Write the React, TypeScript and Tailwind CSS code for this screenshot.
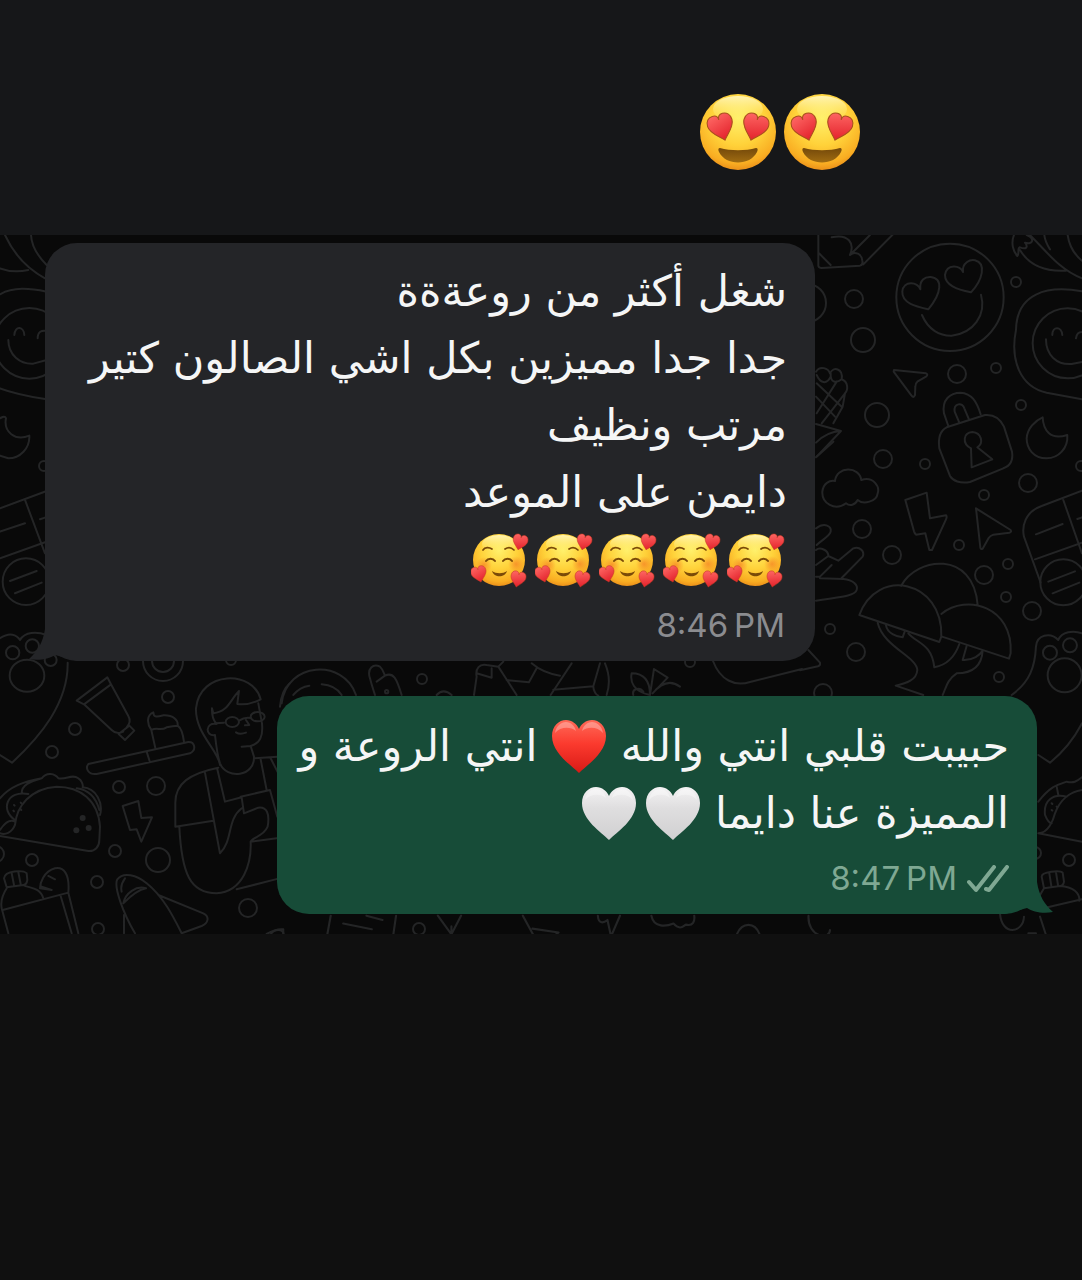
import type { ReactNode } from 'react'

const HEART = 'M0 13C-4 8-12 3-12-4C-12-9-9-12-5-12C-2-12 0-10 0-7C0-10 2-12 5-12C9-12 12-9 12-4C12 3 4 8 0 13Z'

// Shared gradients, referenced by every emoji below
function EmojiDefs() {
  return (
    <svg className="absolute h-0 w-0" aria-hidden="true">
      <defs>
        <radialGradient id="face" cx="50%" cy="32%" r="70%">
          <stop offset="0" stopColor="#fff06a" />
          <stop offset="0.5" stopColor="#ffd23a" />
          <stop offset="0.85" stopColor="#f9ad22" />
          <stop offset="1" stopColor="#e88a18" />
        </radialGradient>
        <linearGradient id="faceShine" x1="0" y1="0" x2="0" y2="1">
          <stop offset="0" stopColor="#fffbd0" stopOpacity="0.8" />
          <stop offset="1" stopColor="#fff06a" stopOpacity="0" />
        </linearGradient>
        <linearGradient id="smallHeart" x1="0" y1="0" x2="0.3" y2="1">
          <stop offset="0" stopColor="#ff6a66" />
          <stop offset="1" stopColor="#e5262f" />
        </linearGradient>
        <linearGradient id="redHeart" x1="0" y1="0" x2="0" y2="1">
          <stop offset="0" stopColor="#ff6a58" />
          <stop offset="0.45" stopColor="#fb3a2e" />
          <stop offset="1" stopColor="#d91a16" />
        </linearGradient>
        <linearGradient id="whiteHeart" x1="0" y1="0" x2="0" y2="1">
          <stop offset="0" stopColor="#f4f3f4" />
          <stop offset="0.4" stopColor="#dfdedf" />
          <stop offset="1" stopColor="#d0d0d1" />
        </linearGradient>
        <linearGradient id="mouth" x1="0" y1="0" x2="0" y2="1">
          <stop offset="0" stopColor="#74490a" />
          <stop offset="1" stopColor="#a06c12" />
        </linearGradient>
        <radialGradient id="blush">
          <stop offset="0" stopColor="#f47a24" stopOpacity="0.65" />
          <stop offset="1" stopColor="#f47a24" stopOpacity="0" />
        </radialGradient>
      </defs>
    </svg>
  )
}

function HeartEyes() {
  return (
    <svg viewBox="0 0 76 76" className="h-[76px] w-[76px]" role="img" aria-label="😍">
      <circle cx="38" cy="38" r="38" fill="url(#face)" />
      <ellipse cx="38" cy="15" rx="25" ry="13" fill="url(#faceShine)" />
      <g fill="url(#smallHeart)" stroke="#a8501d" strokeWidth="1">
        <path d={HEART} transform="translate(21 33) rotate(-17) scale(1.06)" />
        <path d={HEART} transform="translate(55 33) rotate(17) scale(1.06)" />
      </g>
      <path d="M20 54C30 57 46 57 56 54C58 54 58 56 57 58C50 72 26 72 19 58C18 56 18 54 20 54Z" fill="url(#mouth)" />
    </svg>
  )
}

function SmilingHearts() {
  return (
    <svg viewBox="0 0 58 56" className="h-[56px] w-[58px] shrink-0" role="img" aria-label="🥰">
      <circle cx="28" cy="28" r="26" fill="url(#face)" />
      <ellipse cx="28" cy="12" rx="17" ry="9" fill="url(#faceShine)" />
      <circle cx="13" cy="33" r="8" fill="url(#blush)" />
      <circle cx="45" cy="32" r="8" fill="url(#blush)" />
      <g fill="none" stroke="#7a4a08" strokeWidth="1.700" strokeLinecap="round">
        <path d="M12 18C14 15 18 15 21 17" />
        <path d="M34 17C37 15 40 15 43 18" />
        <path d="M15 29C17 26 22 26 24 29" strokeWidth="2" />
        <path d="M32 29C34 26 39 26 41 29" strokeWidth="2" />
      </g>
      <path d="M21 39C25 42 32 42 36 39C34 46 23 46 21 39Z" fill="#7a4a08" />
      <g fill="url(#smallHeart)" stroke="#c43a22" strokeWidth="0.800">
        <path d={HEART} transform="translate(49 10) rotate(14) scale(0.62)" />
        <path d={HEART} transform="translate(8 42) rotate(-14) scale(0.64)" />
        <path d={HEART} transform="translate(47 47) rotate(12) scale(0.63)" />
      </g>
    </svg>
  )
}

function BigHeart({ white = false }: { white?: boolean }) {
  return (
    <svg
      viewBox="0 0 56 56"
      className="h-[56px] w-[56px] shrink-0"
      role="img"
      aria-label={white ? '🤍' : '❤️'}
    >
      <path
        d="M28 54C20 46 1 34 1 17C1 7 8 1 15 1C21 1 26 5 28 10C30 5 35 1 41 1C48 1 55 7 55 17C55 34 36 46 28 54Z"
        fill={white ? 'url(#whiteHeart)' : 'url(#redHeart)'}
      />
      <path
        d="M4 14C5 7 10 3 15 3C20 3 24 7 25 12C19 7 9 8 4 14ZM52 14C51 7 46 3 41 3C36 3 32 7 31 12C37 7 47 8 52 14Z"
        fill="#fff"
        opacity={white ? 0.35 : 0.3}
      />
    </svg>
  )
}

function DoubleCheck() {
  return (
    <svg
      viewBox="0 0 42 28"
      className="h-[28px] w-[42px]"
      fill="none"
      stroke="currentColor"
      strokeWidth="4"
      strokeLinecap="round"
      strokeLinejoin="round"
      role="img"
      aria-label="Delivered"
    >
      <path d="M2 17L9 25L27 2" />
      <path d="M19 24L22 25L40 2" />
    </svg>
  )
}

// x, y, radius
const BUBBLES = [
  [854, 299, 9], [863, 340, 12], [1016, 282, 5], [957, 374, 9], [996, 368, 5], [877, 415, 12],
  [1021, 405, 5], [883, 459, 9], [807, 303, 19], [925, 464, 5], [1028, 483, 9], [984, 495, 5],
  [862, 529, 9], [892, 555, 9], [959, 545, 5], [984, 575, 9], [1008, 564, 5], [1006, 597, 5],
  [1032, 611, 9], [830, 629, 5], [856, 652, 9], [999, 677, 5], [823, 693, 9], [1081, 466, 5],
  [123, 665, 6], [168, 697, 6], [75, 729, 6], [52, 752, 6], [119, 787, 6], [156, 786, 9],
  [115, 851, 6], [158, 860, 12], [32, 860, 6], [97, 882, 6], [248, 908, 9], [98, 929, 6],
  [-4, 854, 8], [163, 661, 20], [163, 661, 11], [422, 679, 5], [231, 660, 5], [1069, 860, 6],
  [1035, 853, 6], [419, 929, 6], [44, 466, 5], [690, 662, 5],
]

function Wallpaper() {
  return (
    <svg
      viewBox="0 235 1082 700"
      preserveAspectRatio="xMidYMin slice"
      className="absolute inset-0 h-full w-full"
      fill="none"
      stroke="#242526"
      strokeWidth="2"
      strokeLinecap="round"
      strokeLinejoin="round"
      aria-hidden="true"
    >
      {BUBBLES.map(([x, y, r]) => (
        <circle key={`${x}-${y}-${r}`} cx={x} cy={y} r={r} />
      ))}

      {/* Top right: pencil, love face, padlock */}
      <g transform="translate(800 230) scale(0.3333)" strokeWidth="6">
        <path d="M55 15L55 108Q57 114 65 114L180 107Q190 104 187 92C185 72 165 62 150 75C165 40 145 10 95 22M210 15L150 75M280 12L190 103M57 70L92 105" />
        <circle cx="450" cy="202" r="161" />
        <path d="M385 238C350 230 305 220 307 185C310 150 355 155 361 178C358 150 375 140 392 141C430 145 425 190 385 238Z" />
        <path d="M513 187C470 178 435 165 435 135C440 100 482 105 489 126C486 98 510 88 525 91C560 100 548 150 513 187Z" />
        <path d="M366 255C385 300 420 318 455 317C520 310 560 255 543 194" />
        <path d="M282 420L378 430Q386 434 378 440L352 455Q346 460 346 470L345 495Q340 506 334 496L281 425Z" />
        <path d="M445 588L432 550C425 510 450 488 482 488C515 490 530 515 542 553M478 578L464 545C460 520 488 515 493 535L507 568" />
        <path d="M440 592L555 555C590 552 605 575 612 590L636 665C640 690 630 708 610 715L510 756C480 762 458 752 450 738L418 655C414 625 420 602 440 592Z" />
        <path d="M513 655C485 640 490 608 517 606C545 608 552 640 532 652L577 688L515 712Z" />
        <path d="M728 562C730 600 750 632 802 615C805 655 775 685 740 685C700 685 680 655 680 625C682 595 705 572 728 562Z" />
        <path d="M846 184C740 165 650 190 648 300C630 390 660 470 740 488L846 508" />
        <circle cx="803" cy="340" r="105" />
        <path d="M738 328C738 375 770 405 815 402L846 396M757 315C757 288 785 288 787 315M828 325C830 310 838 306 846 306" />
        <path d="M652 78C640 65 632 40 642 15M652 78C660 70 650 55 660 52C680 60 685 50 675 38C700 45 705 25 680 15M660 60C690 110 740 125 797 122M690 15C740 65 780 120 846 145M733 15C735 35 745 50 750 58M803 15C808 50 825 75 846 92" />
        <path d="M48 425C60 405 85 415 90 430C100 408 130 415 125 448C145 455 145 480 135 490L128 530L100 580M50 435C60 460 80 465 92 440M92 430C90 460 110 460 125 448M50 460L125 530M48 500L105 560M110 455L50 550M135 490L65 580M48 582L123 603L50 680M48 638Q80 605 123 603" />
      </g>

      {/* Right: cloud, bolt, cursor, hand, mushrooms, paw */}
      <g transform="translate(800 440) scale(0.3333)" strokeWidth="6">
        <path d="M48 52L100 5M105 123C110 78 178 78 184 120C220 108 240 140 233 160C230 185 190 195 173 180C165 195 150 200 138 190C105 215 65 190 67 155C70 130 88 120 105 123Z" />
        <path d="M316 180L380 158L390 235L438 226Q442 230 438 238L396 330H388L376 280L348 284Q344 280 342 274Z" />
        <path d="M528 205L632 270Q636 276 628 278L580 284Q570 288 566 294L548 326Q542 330 541 322Z" />
        <path d="M48 265C75 245 95 260 92 275C90 288 65 300 50 315M48 330C60 320 85 330 85 348L115 362L160 325C180 318 195 335 188 350L125 414M48 375L85 348M48 410H60L95 375M60 415L130 417C160 420 175 435 170 450C165 465 145 468 48 482" />
        <path d="M303 438C350 350 520 330 533 495M178 525C230 380 430 420 424 590L418 606L178 525M424 522C500 460 640 500 632 640L627 656L426 590" />
        <path d="M233 548C250 620 350 650 352 690C350 720 320 730 287 737L370 765M258 556C262 580 290 590 308 592L314 575M325 580C350 610 395 610 403 682C440 675 465 650 478 612M500 618L488 660C520 662 540 645 548 632C545 680 515 700 470 700C440 720 438 745 428 765" />
        <path d="M846 152L725 198C675 215 665 260 672 290L722 428M790 180L846 340M705 358L846 308M708 283L788 252M832 237L846 232M745 425L825 394M758 460L838 428" />
        <circle cx="790" cy="427" r="69" />
        <path d="M635 765C690 725 705 680 708 620C710 585 750 575 775 600C785 575 820 570 846 580" />
        <circle cx="750" cy="638" r="21" />
        <circle cx="810" cy="616" r="21" />
        <circle cx="794" cy="706" r="51" />
        <path d="M25 630L60 668Q62 676 54 679L0 691" />
      </g>

      {/* Bottom left: toothpaste, brush, taco, barber, bag, plane */}
      <g transform="translate(0 640) scale(0.3333)" strokeWidth="6">
        <path d="M203 68C205 190 120 290 36 368L0 345" />
        <ellipse cx="81" cy="107" rx="52" ry="48" />
        <circle cx="38" cy="38" r="20" />
        <circle cx="97" cy="18" r="20" />
        <circle cx="152" cy="60" r="18" />
        <path d="M230 182L322 112L333 133L252 193ZM252 193L335 270Q350 285 370 275M333 133L385 228Q395 245 380 262M356 282L388 257L403 272L375 300Z" />
        <path d="M265 372L565 306C585 305 590 330 570 340L290 402C265 405 255 385 265 372ZM440 335L450 367M466 324L454 270C440 250 440 225 460 217C460 235 475 230 490 226C520 225 535 240 533 257C545 265 550 290 552 306M454 270C475 260 480 275 500 262Q520 258 533 257" />
        <path d="M0 475C30 440 70 425 125 415C140 395 165 400 175 415C200 420 215 400 235 415C245 420 250 435 248 442C290 445 310 490 300 525M65 460C65 435 90 425 125 415M0 588L265 633C285 635 298 620 298 600L300 560C295 480 240 440 170 440C90 445 50 500 45 555C35 580 15 585 0 580M45 545C25 535 10 555 0 570M45 540C0 510 20 450 85 462M230 445C270 450 290 480 298 510" />
        <path d="M42 495L44 497M62 488L64 490M40 512L42 514M62 508L64 510" />
        <g fill="#242526" stroke="none">
          <circle cx="248" cy="534" r="9" />
          <circle cx="229" cy="571" r="9" />
          <circle cx="266" cy="564" r="9" />
        </g>
        <path d="M368 498L415 483L424 534L456 532L424 605L410 568L390 570Z" />
        <path d="M660 375C655 330 585 280 588 205C600 90 760 90 782 178C760 190 735 195 712 192L717 153C690 180 685 215 640 220L636 205C635 240 645 245 650 252C615 245 615 290 645 285C650 330 655 355 660 370C680 420 765 410 762 350L752 318C780 310 790 290 786 250L775 190M725 320L752 318M672 248L645 250" />
        <ellipse cx="697" cy="246" rx="20" ry="15" />
        <ellipse cx="773" cy="230" rx="21" ry="14" />
        <path d="M717 242Q735 230 752 234M708 277Q720 285 738 278M738 240L748 255L735 256" />
        <path d="M655 383C570 400 525 430 526 490V560L640 542M538 560C545 700 570 760 650 760C730 755 755 670 752 605M615 398L660 640C700 600 680 540 725 505M652 388L675 485L725 472L732 520L775 503C800 500 810 520 803 560C790 590 760 590 752 605L830 595M722 470L810 450L832 530M765 355L832 350M782 358L800 450M812 355L835 400M710 748L835 716M840 200Q845 150 870 130" />
        <path d="M12 715C15 690 70 690 80 700L82 720Q80 735 70 735L20 742ZM35 700L42 735M55 697L62 732M22 742C10 760 0 780 5 805L25 880M70 735C85 745 120 740 130 775M8 810L205 758L235 880M182 768L215 880M205 758C210 700 190 680 165 685C130 695 120 730 120 745L155 750M145 708L165 718M125 740L155 750" />
        <path d="M405 880C370 820 340 740 352 718C370 695 410 705 440 730C490 770 520 830 545 880M375 715Q360 735 365 755M370 790C375 760 410 735 438 745Q410 750 370 790M475 765L610 820C630 830 625 850 605 858L545 880M372 825V880M800 882Q830 865 850 868V880" />
      </g>

      {/* Left edge */}
      <g transform="translate(0 225) scale(0.3333)" strokeWidth="6">
        <path d="M0 130Q40 145 85 135M15 30C40 85 80 130 135 160M93 30C95 70 120 100 140 120M0 208C40 185 90 190 140 200M0 490C40 505 90 515 140 523M0 580Q15 570 18 580C10 620 45 650 88 632C90 670 60 700 25 700L0 692M0 850L140 798M75 825L135 985M0 1000L135 952M0 920L75 895M120 883L135 878M30 1068L110 1038M45 1105L125 1073M0 1240C30 1220 50 1230 60 1245C75 1220 110 1220 140 1230" />
        <circle cx="88" cy="355" r="106" />
        <path d="M25 345C25 390 60 418 100 416L140 405M43 330C45 300 72 305 73 330M113 340C113 320 125 315 140 318" />
        <circle cx="78" cy="1070" r="70" />
      </g>

      {/* Gap between the two messages */}
      <g transform="translate(280 655) scale(0.3333)" strokeWidth="6">
        <path d="M5 145C20 20 190 10 228 120M40 120Q60 95 88 92M125 88Q165 90 185 120M270 70C260 40 280 25 300 35C310 45 312 55 315 62C340 50 350 70 365 120M270 70Q275 90 285 120M290 80L315 62M470 120Q490 98 515 120M582 120L590 65C585 40 600 25 620 30L655 35L670 20M590 55L635 68V40M655 35L710 120M680 75L747 82L770 40M755 25Q790 55 840 62M875 25L812 120M820 104L940 94L960 25M940 94C940 110 950 120 955 122M975 25C990 60 990 90 980 120M1110 120C1060 110 1050 80 1055 55C1085 55 1110 70 1110 120L1122 42L1163 68L1118 115M1060 120C1055 100 1080 95 1090 110M1118 115Q1160 65 1200 95" />
        <circle cx="320" cy="110" r="5" />
      </g>
      <path d="M713 661C720 680 735 687 750 682L802 669" />

      {/* Right edge next to the reply */}
      <g transform="translate(1000 690) scale(0.3333)" strokeWidth="6">
        <path d="M115 195L150 218C185 190 220 150 246 100M115 335C150 290 170 285 200 275C220 280 230 275 246 262M115 430C145 430 160 390 165 370C180 330 210 305 246 300M115 430L246 455M170 290L175 315M135 375C130 330 160 310 200 320M135 375Q145 400 155 400M155 340L157 342M170 350L172 352M155 360L157 362M125 560C125 545 180 540 188 548L192 575Q190 588 180 588L132 595ZM148 550L154 588M168 547L174 585M132 595L120 615M180 588C220 590 240 610 238 632M130 655L246 628M120 680L138 735M0 670C5 740 70 730 72 680M85 730H108" />
      </g>

      {/* Strip below the reply */}
      <g transform="translate(270 905) scale(0.3571)" strokeWidth="6">
        <path d="M0 85C10 65 40 65 38 85M170 30L160 85M205 52L285 68M270 30L315 42M353 30L345 85M470 30L508 82L535 30M508 60V85M708 30L738 85M735 66L808 77L798 85M918 30C920 55 935 50 945 42L955 88L980 30M1068 30C1075 65 1110 60 1130 52C1150 75 1160 55 1165 55C1185 60 1190 45 1188 30M1305 88C1320 45 1360 45 1373 88M1508 30C1505 90 1568 100 1568 70" />
      </g>
    </svg>
  )
}

function Line({ children }: { children: ReactNode }) {
  return <p className="flex h-[67px] items-center whitespace-pre">{children}</p>
}

export default function App() {
  return (
    <div className="min-h-screen bg-[#101010] font-['DejaVu_Sans',sans-serif]">
      <EmojiDefs />

      {/* Header */}
      <header className="flex h-[235px] justify-end gap-2 bg-[#161719] pt-[94px] pr-[222px]">
        <HeartEyes />
        <HeartEyes />
      </header>

      {/* Chat */}
      <main className="relative flex flex-col gap-[35px] overflow-hidden bg-[#090909] pt-2 pr-[45px] pb-5 pl-[45px]">
        <Wallpaper />

        {/* Received */}
        <article className="relative w-[770px] max-w-full self-start rounded-[32px] bg-[#242528] px-7 pt-[15px] pb-[15px]">
          <svg viewBox="0 0 48 40" className="absolute bottom-0 -left-4 h-10 w-12 text-[#242528]" aria-hidden="true">
            <path d="M16 0V8C14 22 8 31 0 38C10 40 20 38 26 34L48 40V0Z" fill="currentColor" />
          </svg>
          <div dir="rtl" lang="ar" className="relative text-[43px] text-[#f5f6f6]">
            <Line>شغل أكثر من روعةةة</Line>
            <Line>جدا جدا مميزين بكل اشي الصالون كتير</Line>
            <Line>مرتب ونظيف</Line>
            <Line>دايمن على الموعد</Line>
            <Line>
              <span className="flex gap-[6px] pr-[2px]">
                <SmilingHearts />
                <SmilingHearts />
                <SmilingHearts />
                <SmilingHearts />
                <SmilingHearts />
              </span>
            </Line>
          </div>
          <div className="relative mt-[13px] flex h-10 items-center justify-end pr-[2px] font-['Inter',sans-serif] text-[33px] text-[#8b8c90]">
            <time>8:46&#8201;PM</time>
          </div>
        </article>

        {/* Sent */}
        <article className="relative w-[760px] max-w-full self-end rounded-[32px] bg-[#174c38] px-7 pt-[17px] pb-[15px]">
          <svg viewBox="0 0 48 40" className="absolute -right-4 bottom-0 h-10 w-12 text-[#174c38]" aria-hidden="true">
            <path d="M32 0V8C34 22 40 31 48 38C38 40 28 38 22 34L0 40V0Z" fill="currentColor" />
          </svg>
          <div dir="rtl" lang="ar" className="relative text-[43px] text-[#f5f6f6]">
            <Line>
              <span>حبيبت قلبي انتي والله </span>
              <BigHeart />
              <span> انتي الروعة و</span>
            </Line>
            <Line>
              <span>المميزة عنا دايما </span>
              <span className="flex gap-2">
                <BigHeart white />
                <BigHeart white />
              </span>
            </Line>
          </div>
          <div className="relative mt-[12px] flex h-10 items-center justify-end gap-[10px] font-['Inter',sans-serif] text-[33px] text-[#7fa893]">
            <time>8:47&#8201;PM</time>
            <DoubleCheck />
          </div>
        </article>
      </main>
    </div>
  )
}
